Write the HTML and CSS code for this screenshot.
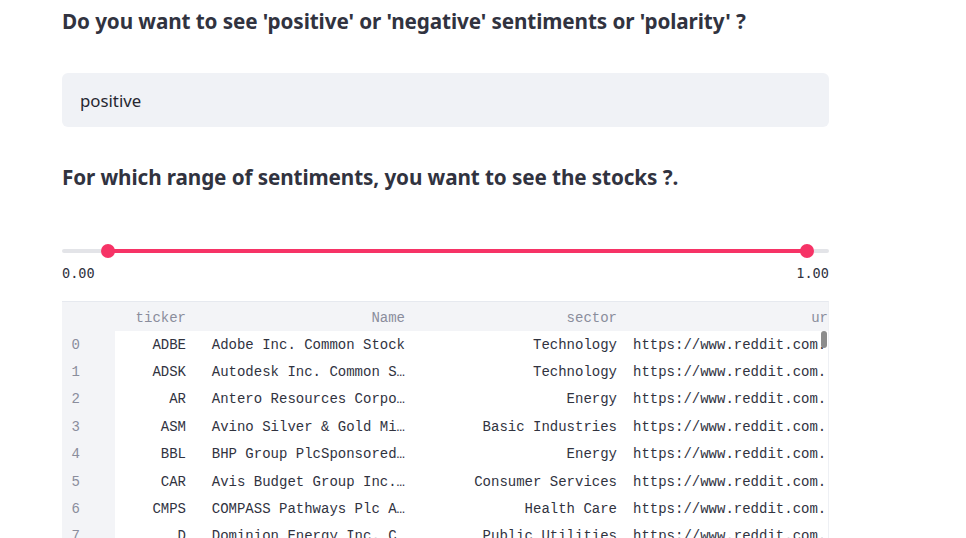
FILE: index.html
```html
<!DOCTYPE html>
<html>
<head>
<meta charset="utf-8">
<link rel="stylesheet" href="styles.css">
</head>
<body>
<div class="main">
  <h2 class="q q1">Do you want to see 'positive' or 'negative' sentiments or 'polarity' ?</h2>
  <div class="input">positive</div>
  <h2 class="q q2">For which range of sentiments, you want to see the stocks ?.</h2>
  <div class="slider">
    <div class="track">
      <div class="fill"></div>
      <span class="thumb t1"></span>
      <span class="thumb t2"></span>
    </div>
    <div class="labels"><span>0.00</span><span>1.00</span></div>
  </div>
  <div class="table">
    <div class="row head">
      <div class="c idx"></div>
      <div class="c tk">ticker</div>
      <div class="c nm">Name</div>
      <div class="c sc">sector</div>
      <div class="c ur"><span class="urh">ur</span></div>
    </div>
    <div class="row"><div class="c idx">0</div><div class="c tk">ADBE</div><div class="c nm">Adobe Inc. Common Stock</div><div class="c sc">Technology</div><div class="c ur">https://www.reddit.com.</div></div>
    <div class="row"><div class="c idx">1</div><div class="c tk">ADSK</div><div class="c nm">Autodesk Inc. Common S…</div><div class="c sc">Technology</div><div class="c ur">https://www.reddit.com.</div></div>
    <div class="row"><div class="c idx">2</div><div class="c tk">AR</div><div class="c nm">Antero Resources Corpo…</div><div class="c sc">Energy</div><div class="c ur">https://www.reddit.com.</div></div>
    <div class="row"><div class="c idx">3</div><div class="c tk">ASM</div><div class="c nm">Avino Silver &amp; Gold Mi…</div><div class="c sc">Basic Industries</div><div class="c ur">https://www.reddit.com.</div></div>
    <div class="row"><div class="c idx">4</div><div class="c tk">BBL</div><div class="c nm">BHP Group PlcSponsored…</div><div class="c sc">Energy</div><div class="c ur">https://www.reddit.com.</div></div>
    <div class="row"><div class="c idx">5</div><div class="c tk">CAR</div><div class="c nm">Avis Budget Group Inc.…</div><div class="c sc">Consumer Services</div><div class="c ur">https://www.reddit.com.</div></div>
    <div class="row"><div class="c idx">6</div><div class="c tk">CMPS</div><div class="c nm">COMPASS Pathways Plc A…</div><div class="c sc">Health Care</div><div class="c ur">https://www.reddit.com.</div></div>
    <div class="row"><div class="c idx">7</div><div class="c tk">D</div><div class="c nm">Dominion Energy Inc. C…</div><div class="c sc">Public Utilities</div><div class="c ur">https://www.reddit.com.</div></div>
    <span class="scroll"></span>
  </div>
</div>
</body>
</html>
```
FILE: styles.css
```css
html, body {
  margin: 0;
  padding: 0;
  background: #ffffff;
  overflow: hidden;
  height: 538px;
}
.main {
  width: 767px;
  margin-left: 62px;
  display: flex;
  flex-direction: column;
  color: #31333f;
  font-family: "Noto Sans", "Open Sans", sans-serif;
}
.q {
  margin: 0;
  font-size: 20.7px;
  font-weight: 700;
  line-height: 24px;
  letter-spacing: -0.1px;
  white-space: nowrap;
}
.q1 { margin-top: 9px; }
.input {
  margin-top: 40px;
  height: 54px;
  box-sizing: border-box;
  background: #f0f2f6;
  border-radius: 6px;
  padding-left: 18px;
  display: flex;
  align-items: center;
  font-size: 16.8px;
  color: #262730;
}
.q2 { margin-top: 38px; }
.slider {
  margin-top: 60px;
}
.track {
  position: relative;
  height: 4px;
  background: #e3e4e8;
  border-radius: 2px;
}
.fill {
  position: absolute;
  left: 46px;
  right: 22px;
  top: 0;
  height: 4px;
  background: #f63366;
}
.thumb {
  position: absolute;
  top: -5px;
  width: 14px;
  height: 14px;
  border-radius: 50%;
  background: #f63366;
}
.t1 { left: 39px; }
.t2 { left: 738px; }
.labels {
  margin-top: 12px;
  display: flex;
  justify-content: space-between;
  font-family: "DejaVu Sans Mono", monospace;
  font-size: 13.6px;
  color: #31333f;
  line-height: 17px;
}
.table {
  position: relative;
  margin-top: 19px;
  border-top: 1px solid #e6e9ef;
  border-right: 1px solid #eef0f4;
  background: #ffffff;
  font-family: "Liberation Mono", "DejaVu Sans Mono", monospace;
  font-size: 14px;
  overflow: hidden;
  height: 300px;
}
.row {
  display: flex;
  height: 27.4px;
  align-items: center;
  white-space: nowrap;
}
.row.head {
  height: 29px;
  padding-top: 2px;
  box-sizing: border-box;
  background: #f3f4f7;
  color: #8a8d9c;
}
.c {
  box-sizing: border-box;
  padding: 0 8px;
  overflow: hidden;
  flex: none;
  height: 100%;
  display: flex;
  align-items: center;
}
.idx {
  width: 53px;
  justify-content: flex-end;
  padding-right: 35px;
  color: #8a8d9c;
  background: #f3f4f7;
  align-self: stretch;
}
.tk { width: 79px; justify-content: flex-end; }
.nm { width: 219px; justify-content: flex-end; }
.sc { width: 212px; justify-content: flex-end; }
.ur { width: 203px; padding-left: 8px; justify-content: flex-start; padding-right: 0; }
.row.head .ur { justify-content: flex-end; }
.row.head .idx { background: #f3f4f7; }
.scroll {
  position: absolute;
  right: 1px;
  top: 29px;
  width: 6px;
  height: 17px;
  border-radius: 3px;
  background: #8c8c8c;
}
```
